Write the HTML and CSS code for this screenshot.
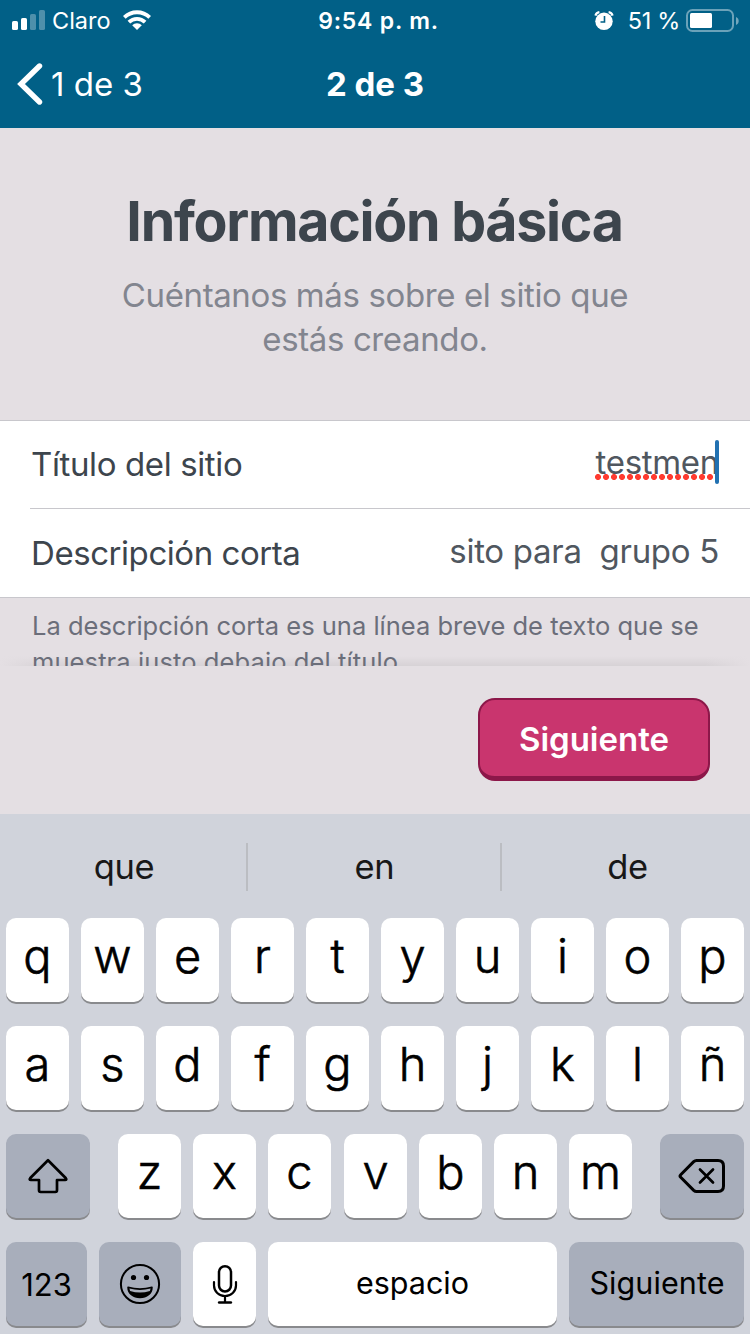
FILE: index.html
```
<!DOCTYPE html>
<html lang="es">
<head>
<meta charset="utf-8">
<title>Información básica</title>
<link rel="stylesheet" href="styles.css">
</head>
<body>
<div class="screen">
  <header class="header">
    <div class="status">
      <div class="status-left">
        <svg class="signal" width="34" height="20" viewBox="0 0 34 20" fill="#fff"><rect x="0" y="11" width="6" height="9" rx="1.6"/><rect x="9" y="8" width="6" height="12" rx="1.6"/><g opacity=".3"><rect x="18" y="4" width="6" height="16" rx="1.6"/><rect x="27" y="0" width="6" height="20" rx="1.6"/></g></svg>
        <span class="carrier">Claro</span>
        <svg class="wifi" width="28" height="20" viewBox="0 0 28 20"><g fill="none" stroke="#fff" stroke-width="3.8"><path d="M1.3 7.4A18.2 18.2 0 0 1 26.7 7.4"/><path d="M5.9 12.1A11.7 11.7 0 0 1 22.1 12.1"/></g><path fill="#fff" d="M9.2 15.3a6.7 6.7 0 0 1 9.6 0L14 20z"/></svg>
      </div>
      <span class="clock">9:54 p. m.</span>
      <div class="status-right">
        <svg class="alarm" width="20" height="20" viewBox="0 0 20 20"><circle cx="10" cy="10.3" r="8.7" fill="#fff"/><path d="M1.400 4.600A5 5 0 0 1 5.400 1.200M18.600 4.600A5 5 0 0 0 14.600 1.200" stroke="#fff" stroke-width="2.200" fill="none"/><path d="M10.500 5v6H6.500" stroke="#016087" stroke-width="1.6" fill="none"/></svg>
        <span class="percent">51 %</span>
        <svg class="battery" width="54" height="24" viewBox="0 0 54 24"><rect x="1" y="1" width="46" height="21" rx="5.500" fill="none" stroke="#fff" stroke-opacity=".42" stroke-width="2"/><rect x="4" y="4" width="22" height="15" rx="1.500" fill="#fff"/><path d="M50 8c3.600 1.200 3.600 6.800 0 8z" fill="#fff" fill-opacity=".45"/></svg>
      </div>
    </div>
    <nav class="nav">
      <a class="back"><svg width="26" height="44" viewBox="0 0 26 44"><path d="M22.500 4 4 22 22.500 40" fill="none" stroke="#fff" stroke-width="5.400" stroke-linecap="round" stroke-linejoin="miter"/></svg><span>1 de 3</span></a>
      <span class="nav-title">2 de 3</span>
      <span></span>
    </nav>
  </header>

  <main class="content">
    <h1 class="title">Información básica</h1>
    <p class="intro">Cuéntanos más sobre el sitio que<br>estás creando.</p>
    <div class="form">
      <div class="row row-title"><span class="label label-title">Título del sitio</span><span class="value value-title">testmen<i class="spelling"></i><i class="caret"></i></span></div>
      <div class="separator"></div>
      <div class="row row-desc"><span class="label label-desc">Descripción corta</span><span class="value value-desc">sito para&nbsp; grupo 5</span></div>
    </div>
    <p class="hint">La descripción corta es una línea breve de texto que se<br><span>muestra justo debajo del título.</span></p>
  </main>

  <div class="action-bar"><button class="next">Siguiente</button></div>

  <section class="keyboard">
    <div class="suggestions"><span>que</span><i></i><span>en</span><i></i><span>de</span></div>
    <div class="keys"><b>q</b><b>w</b><b>e</b><b>r</b><b>t</b><b>y</b><b>u</b><b>i</b><b>o</b><b>p</b></div>
    <div class="keys"><b>a</b><b>s</b><b>d</b><b>f</b><b>g</b><b>h</b><b>j</b><b>k</b><b>l</b><b>ñ</b></div>
    <div class="keys keys-third">
      <b class="dark"><svg width="40" height="36" viewBox="0 0 40 36"><path d="M20 2.300 2.300 20q-1.500 2 .7 2H11v10.300q0 1.700 1.700 1.700h14.600q1.700 0 1.700-1.700V22h8q2.200 0 .7-2z" fill="none" stroke="#000" stroke-width="2.700" stroke-linejoin="round"/></svg></b>
      <div class="letters"><b>z</b><b>x</b><b>c</b><b>v</b><b>b</b><b>n</b><b>m</b></div>
      <b class="dark"><svg class="delete" width="48" height="36" viewBox="0 0 48 36"><path d="M18.500 2.500H40q5.500 0 5.500 5.500v20q0 5.500-5.500 5.500H18.500q-1.500 0-2.800-1.200L2.700 19.300q-1.300-1.300 0-2.600l13-13q1.300-1.200 2.800-1.200z" fill="none" stroke="#000" stroke-width="3"/><path d="m22 11.500 13 13m0-13-13 13" stroke="#000" stroke-width="2.700" stroke-linecap="round"/></svg></b>
    </div>
    <div class="keys keys-fourth">
      <b class="dark numbers">123</b>
      <b class="dark"><svg width="42" height="42" viewBox="0 0 42 42"><circle cx="21" cy="21" r="19.100" fill="none" stroke="#000" stroke-width="2"/><circle cx="14.500" cy="14.500" r="2.600"/><circle cx="27.500" cy="14.500" r="2.600"/><path d="M9 24.200q12 3.400 24 0c0 6.300-5.300 10.200-12 10.200S9 30.500 9 24.200z" fill="#000" stroke="#000" stroke-width="1.500" stroke-linejoin="round"/><path d="M10.400 25.600q10.600 2.600 21.200 0l-.7 2.300q-9.900 3-19.800 0z" fill="#a8aebb"/></svg></b>
      <b><svg width="26" height="42" viewBox="0 0 26 42" fill="none" stroke="#000" stroke-linecap="round"><rect x="7" y="3.200" width="12" height="25.300" rx="6" stroke-width="2.500"/><path d="M2 19v3.500a11 10.500 0 0 0 22 0V19M13 33v6" stroke-width="2.200"/><path d="M7.200 39.500h11.600" stroke-width="2.700"/></svg></b>
      <b class="word">espacio</b>
      <b class="dark word word-next">Siguiente</b>
    </div>
  </section>
</div>
</body>
</html>
```
FILE: styles.css
```
* { box-sizing: border-box; }
body { margin: 0; font-family: Inter, "Liberation Sans", sans-serif; }
svg { display: block; flex: none; }
.screen { width: 750px; height: 1334px; display: flex; flex-direction: column; overflow: hidden; background: #e4dfe3; }

.header { height: 128px; background: #016087; color: #fff; flex: none; }
.status { height: 41px; display: grid; grid-template-columns: 1fr auto 1fr; align-items: center; padding: 0 10px 0 12px; font-size: 23.500px; line-height: 40px; white-space: nowrap; }
.status-left, .status-right { display: flex; align-items: center; }
.status-right { justify-content: flex-end; }
.signal { margin-top: -1px; }
.carrier { margin-left: 6px; }
.wifi { margin-left: 12px; margin-top: -1px; }
.clock { font-weight: 600; font-size: 23px; letter-spacing: .8px; padding-left: 5px; }
.percent { margin: 0 6px 0 14px; letter-spacing: -.3px; }
.nav { height: 85px; display: grid; grid-template-columns: 1fr auto 1fr; align-items: center; padding: 0 17px; font-size: 33px; }
.back { display: flex; align-items: center; gap: 8px; }
.nav-title { font-weight: 700; }

.content { height: 538px; padding-top: 59px; flex: none; position: relative; overflow: hidden; }
.content::after { content: ""; position: absolute; left: 0; right: 0; bottom: 0; height: 10px; background: linear-gradient(90deg, #e4dfe3, transparent 6%, transparent 94%, #e4dfe3), linear-gradient(#0000, rgba(0,0,0,.06)); z-index: 0; }
.title { margin: 0; line-height: 68px; font-size: 55.500px; font-weight: 700; text-align: center; color: #3d454d; letter-spacing: -1.300px; white-space: nowrap; padding-right: 1px; }
.intro { margin: 18px 0 59px; font-size: 33px; line-height: 44px; text-align: center; color: #82858f; letter-spacing: -.38px; }
.form { background: #fff; border-top: 1px solid #c8c7cc; border-bottom: 1px solid #c8c7cc; height: 178px; display: flex; flex-direction: column; font-size: 33px; }
.row { height: 87px; padding: 0 31px; display: flex; justify-content: space-between; align-items: center; white-space: nowrap; }
.row-title { padding-bottom: 2px; }
.row-desc { height: 88px; }
.separator { height: 1px; background: #c8c7cc; margin-left: 30px; }
.label { color: #3d454d; letter-spacing: -.38px; }
.label-desc { letter-spacing: -.44px; }
.value { color: #50575f; position: relative; padding-bottom: 4px; letter-spacing: -.3px; }
.spelling { position: absolute; left: -1px; top: 32px; width: 118px; height: 6px; background: radial-gradient(circle at 3px 3px, #ff3b30 2.600px, transparent 3.400px) 0 0 / 8px 6px repeat-x; }
.caret { position: absolute; right: 0; top: -2px; width: 4px; height: 44px; border-radius: 2px; background: #2271b1; }
.hint { margin: 10px 32px 0; font-size: 25.500px; line-height: 36px; color: #6b6e7a; white-space: nowrap; position: relative; z-index: 1; }
.hint span { letter-spacing: .1px; }

.action-bar { height: 148px; flex: none; padding: 32px 40px; display: flex; justify-content: flex-end; }
.next { width: 232px; height: 83px; border: 2px solid #8c1749; border-bottom-width: 5px; border-radius: 17px; background: #c9356e; color: #fff; font: 600 33px Inter, "Liberation Sans", sans-serif; padding: 1px 0 0; }

.keyboard { height: 520px; background: #d0d3db; padding: 0 6px; display: flex; flex-direction: column; flex: none; }
.suggestions { height: 104px; display: flex; align-items: center; font-size: 34.500px; color: #181818; padding-top: 2px; }
.suggestions span { flex: 1; text-align: center; padding: 0 0 2px 1px; letter-spacing: -.3px; }
.suggestions span:first-child { flex: none; width: 240px; padding-right: 5px; }
.suggestions span:last-child { flex: none; width: 242px; padding-left: 9px; }
.suggestions i { width: 2px; height: 48px; background: #bbbdc2; }
.keys { display: flex; gap: 12px; height: 108px; align-items: flex-start; flex: none; }
.keys b { width: 63px; height: 84px; border-radius: 10px; background: #fff; box-shadow: 0 2px 0 #898a8d; display: flex; align-items: center; justify-content: center; font-size: 47px; font-weight: 300; -webkit-text-stroke: .6px #000; color: #000; padding-bottom: 10px; flex: none; }
.keys .dark { background: #a8aebb; padding: 0; }
.keys-third { justify-content: space-between; }
.keys-third .dark { width: 84px; }
.letters { display: grid; grid-template-columns: repeat(7, 63px); column-gap: 12px; width: 514px; }
.letters b:nth-child(n+4) { margin-left: 1px; }
.keys-fourth { display: grid; grid-template-columns: 81px 82px 63px 289px 175px; height: 92px; }
.keys-fourth b { width: auto; padding: 0; -webkit-text-stroke: 0; }
.keys .numbers { font-size: 31px; font-weight: 400; }
.keys .word { font-size: 30.500px; font-weight: 400; padding-bottom: 3px; }
.keys .word-next { padding-left: 1px; letter-spacing: .1px; }
```
